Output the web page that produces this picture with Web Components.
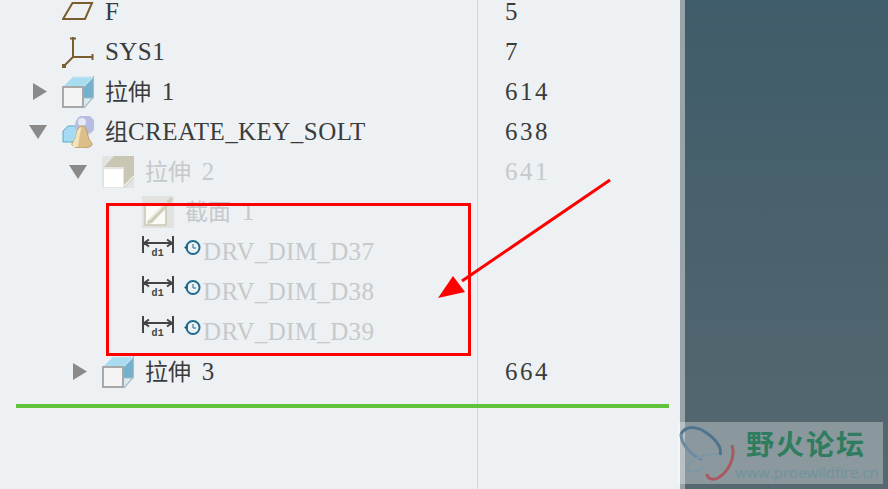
<!DOCTYPE html>
<html>
<head>
<meta charset="utf-8">
<style>
	html, body { margin: 0; height: 100%; overflow: hidden; }
	body { background: #edf1f3; }
</style>
</head>
<body>
<tree-panel>
	<tree-row indent="62" icon="plane" label="F" value="5"></tree-row>
	<tree-row indent="62" icon="csys" label="SYS1" value="7"></tree-row>
	<tree-row indent="62" twisty="closed" icon="solid" label="拉伸 1" value="614"></tree-row>
	<tree-row indent="62" twisty="open" icon="group" label="组CREATE_KEY_SOLT" value="638"></tree-row>
	<tree-row indent="102" twisty="open" icon="solidOff" label="拉伸 2" value="641" off></tree-row>
	<tree-row indent="142" icon="sketch" label="截面 1" off></tree-row>
	<tree-row indent="142" dim label="DRV_DIM_D37" off></tree-row>
	<tree-row indent="142" dim label="DRV_DIM_D38" off></tree-row>
	<tree-row indent="142" dim label="DRV_DIM_D39" off></tree-row>
	<tree-row indent="102" twisty="closed" icon="solid" label="拉伸 3" value="664"></tree-row>
</tree-panel>
<side-backdrop></side-backdrop>
<red-callout></red-callout>
<forum-mark></forum-mark>

<script>
const FONT = `"Liberation Serif", "Noto Sans CJK SC", serif`;

const ICONS = {
	solid: `<path d="M1 11 11 1H32V21L22 32H1Z" fill="#dcebf1"/>
		<path d="M11 1H31L21 11H1Z" fill="#a8dcf0"/>
		<path d="M32 1 22 11V22H32Z" fill="#74b0cb"/>
		<path d="M1 11 11 1H31" fill="none" stroke="#cfe3ea"/>
		<path d="M31.5 0V21L22 32M22 22H32" fill="none" stroke="#a5bcc6" stroke-width="1.2"/>
		<rect x="1" y="11" width="20" height="20" fill="#f4f4f4" stroke="#a8a8a8" stroke-width="2"/>`,
	solidOff: `<rect width="32" height="32" fill="#e3e4e2"/>
		<path d="M12 0H32V21L22 11H2Z" fill="#c9c7b4"/>
		<path d="M32 10V22L22 32V11Z" fill="#c9c7b4"/>
		<path d="M22 30 32 20" stroke="#f2f2ec" stroke-width="1.5"/>
		<rect x="2" y="13" width="19" height="18" fill="#fff"/>`,
	group: `<path d="M1 15 6 10H24V26H1Z" fill="#a6dcf3" stroke="#5fa6c6"/>
		<circle cx="23" cy="9" r="10" fill="#b7bde0"/>
		<circle cx="20" cy="6" r="4" fill="#e6e8f6"/>
		<path d="M20 10C24 10 25 15 26 20 27 25 31 27 30 29 28 33 12 33 10 29 9 27 13 25 14 20 15 15 16 10 20 10Z" fill="#dcbf88" stroke="#b89a66"/>
		<path d="M20 11C18 15 17 24 16 31H11C9 27 13 25 14 20 15 15 16 11 20 11Z" fill="#f3e3bb"/>`,
	sketch: `<rect width="32" height="32" fill="#e2e2e0"/>
		<rect x="3" y="9" width="21" height="20" fill="#fbfbf6" stroke="#c9c7b4" stroke-width="1.5"/>
		<path d="M6 24 24 6 29 1 31 3 27 9 10 27 5 28Z" fill="#cfcdb9"/>
		<path d="M7 24 25 6" stroke="#f0efe6" stroke-width="1.5"/>`,
	plane: `<path d="M10.5 7H30L23 23H1Z" fill="none" stroke="#7a5c2e" stroke-width="2"/>`,
	csys: `<path d="M11 1V21H31M11 21 2 30" fill="none" stroke="#7a5c2e" stroke-width="2"/>
		<path d="M8 2.5H14M30.5 18V24" fill="none" stroke="#7a5c2e" stroke-width="2"/>
		<rect x="0" y="28" width="4" height="4" fill="#7a5c2e"/>`,
};

class TreeRow extends HTMLElement {
	constructor() {
		super();
		this.attachShadow({ mode: "open" });
	}

	connectedCallback() {
		const indent = Number(this.getAttribute("indent") ?? 62);
		const twisty = this.getAttribute("twisty");
		const icon = this.getAttribute("icon");
		// han glyphs run smaller than the latin ones in this tree
		const label = this.getAttribute("label").replace(
			/([\u4e00-\u9fff]+)( ?)/g,
			(_, han, space) => `<span class="han${space ? " gap" : ""}">${han}</span>${space}`
		);
		let glyph = "";
		if (this.hasAttribute("dim")) {
			glyph = `<svg class="dim" width="32" height="26" viewBox="0 0 32 26">
				<path d="M1 0V17M31 0V17M2 7H30M2 7 7 3.5M2 7 7 10.5M30 7 25 3.5M30 7 25 10.5" fill="none" stroke="#444" stroke-width="2"/>
				<text x="9.5" y="20" font-size="10" font-weight="700" font-family="Liberation Mono" fill="#444">d1</text>
			</svg>
			<svg class="clock" width="17" height="17" viewBox="0 0 17 17">
				<circle cx="9" cy="8.5" r="6.5" fill="none" stroke="#1d6a8c" stroke-width="2"/>
				<path d="M9 5V9H12" fill="none" stroke="#1d6a8c"/>
				<path d="M0 8.5 4 5.5V11.5Z" fill="#1d6a8c"/>
			</svg>`;
		} else if (icon) {
			glyph = `<svg class="icon" width="32" height="32" viewBox="0 0 32 32">${ICONS[icon]}</svg>`;
		}
		const arrow = twisty === "open"
			? `<path d="M0 4H18L9 18Z" fill="#8a8a8a"/>`
			: `<path d="M4 2 18 10.5 4 19Z" fill="#8a8a8a"/>`;
		this.shadowRoot.innerHTML = `<style>
			:host {
				display: grid;
				grid-template-columns: 477px 1fr;
				height: 40px;
				font: 25px/24px ${FONT};
				letter-spacing: 0.45px;
				color: #3b3b3b;
			}
			:host([off]) { color: #c6c9cb; }
			:host([dim]) { letter-spacing: 0.35px; }
			.name {
				display: flex;
				align-items: center;
				padding-left: ${indent}px;
				position: relative;
				white-space: pre;
			}
			.twisty {
				position: absolute;
				left: ${indent - 33}px;
				top: 9px;
			}
			.icon { margin-right: 11px; flex: none; }
			.dim { margin-top: -6px; flex: none; }
			.clock { margin: -10px 2px 0 10px; flex: none; }
			.han { font-size: 23px; line-height: 0; letter-spacing: 0; }
			.gap { margin-right: 4px; }
			.value { padding-left: 28px; align-self: center; letter-spacing: 2.5px; }
		</style>
		<div class="name">
			${twisty ? `<svg class="twisty" width="18" height="22">${arrow}</svg>` : ""}
			${glyph}<span class="label">${label}</span>
		</div>
		<div class="value">${this.getAttribute("value") ?? ""}</div>`;
	}
}
customElements.define("tree-row", TreeRow);

class TreePanel extends HTMLElement {
	constructor() {
		super();
		this.attachShadow({ mode: "open" });
		this.shadowRoot.innerHTML = `<style>
			:host {
				display: block;
				position: absolute;
				inset: 0 208px 0 0;
				background: #edf1f3;
				overflow: hidden;
			}
			.divider {
				position: absolute;
				left: 477px;
				top: 0;
				bottom: 0;
				width: 1px;
				background: #d3d7d9;
			}
			.rows { margin-top: -8px; }
			.end {
				height: 4px;
				margin: 12px 11px 0 16px;
				background: #5fc43c;
				position: relative;
			}
		</style>
		<div class="divider"></div>
		<div class="rows"><slot></slot></div>
		<div class="end"></div>`;
	}
}
customElements.define("tree-panel", TreePanel);

class SideBackdrop extends HTMLElement {
	constructor() {
		super();
		this.attachShadow({ mode: "open" });
		this.shadowRoot.innerHTML = `<style>
			:host {
				display: block;
				position: absolute;
				inset: 0 0 0 680px;
				border-left: 5px solid #98a3a7;
				background: linear-gradient(#3f5c6a, #566870);
			}
		</style>`;
	}
}
customElements.define("side-backdrop", SideBackdrop);

class RedCallout extends HTMLElement {
	constructor() {
		super();
		this.attachShadow({ mode: "open" });
		this.shadowRoot.innerHTML = `<style>
			:host { display: block; position: absolute; inset: 0; pointer-events: none; }
			svg { display: block; }
		</style>
		<svg width="888" height="489">
			<rect x="107.5" y="204.5" width="362" height="150" fill="none" stroke="#ff0000" stroke-width="3"/>
			<path d="M610 180 462 281" stroke="#ff0000" stroke-width="3"/>
			<path d="M438 298 453 276 465 292Z" fill="#ff0000"/>
		</svg>`;
	}
}
customElements.define("red-callout", RedCallout);

class ForumMark extends HTMLElement {
	constructor() {
		super();
		this.attachShadow({ mode: "open" });
		this.shadowRoot.innerHTML = `<style>
			:host {
				display: block;
				position: absolute;
				left: 678px;
				top: 422px;
				width: 205px;
				height: 62px;
				background: rgba(255, 255, 255, 0.32);
			}
			svg { position: absolute; left: 0; top: 0; }
			.cn {
				position: absolute;
				left: 68px;
				top: 6px;
				font: 700 28px/30px "Noto Sans CJK SC", sans-serif;
				letter-spacing: 2px;
				color: #2f7d5e;
				white-space: nowrap;
			}
			.url {
				position: absolute;
				left: 57px;
				top: 41px;
				font: 15px/18px "Open Sans", sans-serif;
				color: #6f939c;
				white-space: nowrap;
			}
		</style>
		<svg width="62" height="62" viewBox="0 0 62 62">
			<path d="M3 12C8 3 20 4 30 12 38 18 44 26 42 33" fill="none" stroke="#4d7590" stroke-width="3"/>
			<path d="M3 12C3 22 12 32 24 38" fill="none" stroke="#6c8ba0" stroke-width="3"/>
			<path d="M54 23C58 36 50 50 40 56 34 59 29 56 29 52" fill="none" stroke="#a85a62" stroke-width="3"/>
			<path d="M40 32C26 32 10 38 9 46 10 52 20 50 27 44" fill="none" stroke="#7d98a6" stroke-width="2"/>
		</svg>
		<div class="cn">野火论坛</div>
		<div class="url">www.proewildfire.cn</div>`;
	}
}
customElements.define("forum-mark", ForumMark);
</script>
</body>
</html>
